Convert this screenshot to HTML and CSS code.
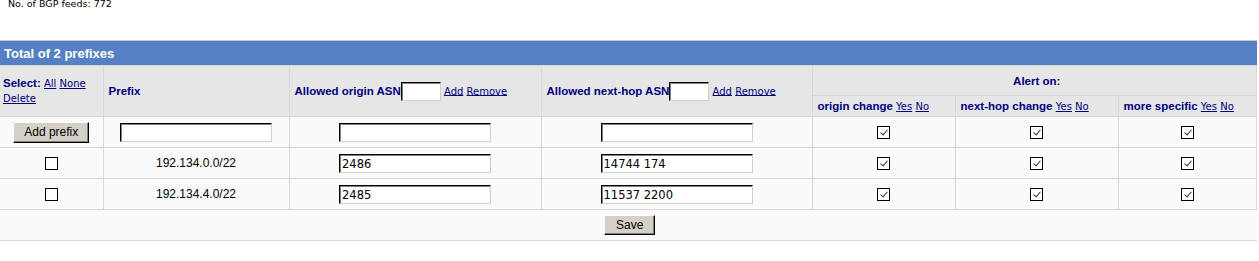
FILE: index.html
```html
<!DOCTYPE html>
<html lang="en">
<head>
    <meta charset="UTF-8">
    <title>BGP prefixes</title>
    <link rel="stylesheet" href="styles.css">
</head>
<body>
    <p class="feeds">No. of BGP feeds: 772</p>

    <table class="prefixes">
        <colgroup>
            <col style="width: 103px">
            <col style="width: 186px">
            <col style="width: 252px">
            <col style="width: 271px">
            <col style="width: 143px">
            <col style="width: 163px">
            <col>
        </colgroup>
        <tr class="title">
            <th colspan="7">Total of 2 prefixes</th>
        </tr>
        <tr class="head">
            <th rowspan="2" class="select">Select: <a href="#">All</a> <a href="#">None</a><br><a href="#">Delete</a></th>
            <th rowspan="2">Prefix</th>
            <th rowspan="2">Allowed origin ASN<input type="text" class="small"> <a href="#">Add</a> <a href="#">Remove</a></th>
            <th rowspan="2">Allowed next-hop ASN<input type="text" class="small"> <a href="#">Add</a> <a href="#">Remove</a></th>
            <th colspan="3" class="alert">Alert on:</th>
        </tr>
        <tr class="head sub">
            <th>origin change <a href="#">Yes</a> <a href="#">No</a></th>
            <th>next-hop change <a href="#">Yes</a> <a href="#">No</a></th>
            <th>more specific <a href="#">Yes</a> <a href="#">No</a></th>
        </tr>
        <tr class="row">
            <td><button>Add prefix</button></td>
            <td><input type="text" class="wide"></td>
            <td><input type="text" class="wide"></td>
            <td><input type="text" class="wide"></td>
            <td><input type="checkbox" checked></td>
            <td><input type="checkbox" checked></td>
            <td><input type="checkbox" checked></td>
        </tr>
        <tr class="row">
            <td><input type="checkbox"></td>
            <td>192.134.0.0/22</td>
            <td><input type="text" class="wide" value="2486"></td>
            <td><input type="text" class="wide" value="14744 174"></td>
            <td><input type="checkbox" checked></td>
            <td><input type="checkbox" checked></td>
            <td><input type="checkbox" checked></td>
        </tr>
        <tr class="row">
            <td><input type="checkbox"></td>
            <td>192.134.4.0/22</td>
            <td><input type="text" class="wide" value="2485"></td>
            <td><input type="text" class="wide" value="11537 2200"></td>
            <td><input type="checkbox" checked></td>
            <td><input type="checkbox" checked></td>
            <td><input type="checkbox" checked></td>
        </tr>
        <tr class="row save">
            <td colspan="7"><button>Save</button></td>
        </tr>
    </table>
</body>
</html>
```

FILE: styles.css
```css
body {
    margin: 0;
    background: #fff;
    font-family: "Liberation Sans", Arial, sans-serif;
    font-size: 12px;
    color: #000;
}

.feeds {
    margin: 0 0 0 8px;
    font-family: "DejaVu Sans", Verdana, sans-serif;
    font-size: 9.5px;
    line-height: 9px;
    margin-top: -1px;
}

.prefixes {
    margin-top: 32px;
    width: calc(100% - 2px);
    border-collapse: collapse;
    table-layout: fixed;
    border-top: 1px solid #c8c8c8;
}

.prefixes th,
.prefixes td {
    border: 1px solid #d8d8d8;
    padding: 0;
}

.title th {
    background: #5581c4;
    color: #fff;
    font-size: 13px;
    text-align: left;
    padding-left: 4px;
    height: 24px;
    border: none;
}

.head th {
    background: #e6e6e6;
    color: #00007f;
    font-size: 11.5px;
    text-align: left;
    padding-left: 5px;
    vertical-align: middle;
    white-space: nowrap;
}

.head th:first-child {
    border-left: none;
}

.head .select {
    padding-left: 3px;
    line-height: 15px;
}

.head .alert {
    text-align: center;
    height: 29px;
}

.sub th {
    height: 20px;
}

.head a {
    font-family: "DejaVu Sans", Verdana, sans-serif;
    font-size: 10px;
    font-weight: normal;
    color: #00007f;
}

.row td {
    background: #fafafa;
    text-align: center;
    height: 30px;
}

.row td:first-child {
    border-left: none;
}

.save td {
    border-right: none;
}

input[type="text"] {
    box-sizing: border-box;
    height: 19px;
    border: 1px solid #d4d0c8;
    border-top-color: #000;
    border-left-color: #000;
    box-shadow: inset 1px 1px 0 #808080;
    background: #fff;
    font-family: "DejaVu Sans", sans-serif;
    font-size: 11.5px;
    padding: 1px 2px 0;
    vertical-align: middle;
}

.small {
    width: 40px;
}

.wide {
    width: 152px;
    text-align: left;
}

button {
    background: #d4d0c8;
    border: 1px solid;
    border-color: #fff #000 #000 #fff;
    box-shadow: inset -1px -1px 0 #808080;
    font-family: "Liberation Sans", Arial, sans-serif;
    font-size: 12px;
    color: #000;
    padding: 2px 10px 3px;
    height: 21px;
}

.save button {
    padding: 0 11px;
    height: 20px;
    margin-left: 3px;
}

input[type="checkbox"] {
    appearance: none;
    box-sizing: border-box;
    width: 13px;
    height: 13px;
    margin: 0;
    border: 1px solid #000;
    background: #fff;
    vertical-align: middle;
    position: relative;
}

input[type="checkbox"]:checked::after {
    content: "";
    position: absolute;
    left: 4px;
    top: 1px;
    width: 3px;
    height: 6px;
    border-right: 1.5px solid #333;
    border-bottom: 1.5px solid #333;
    transform: rotate(40deg);
}
```
